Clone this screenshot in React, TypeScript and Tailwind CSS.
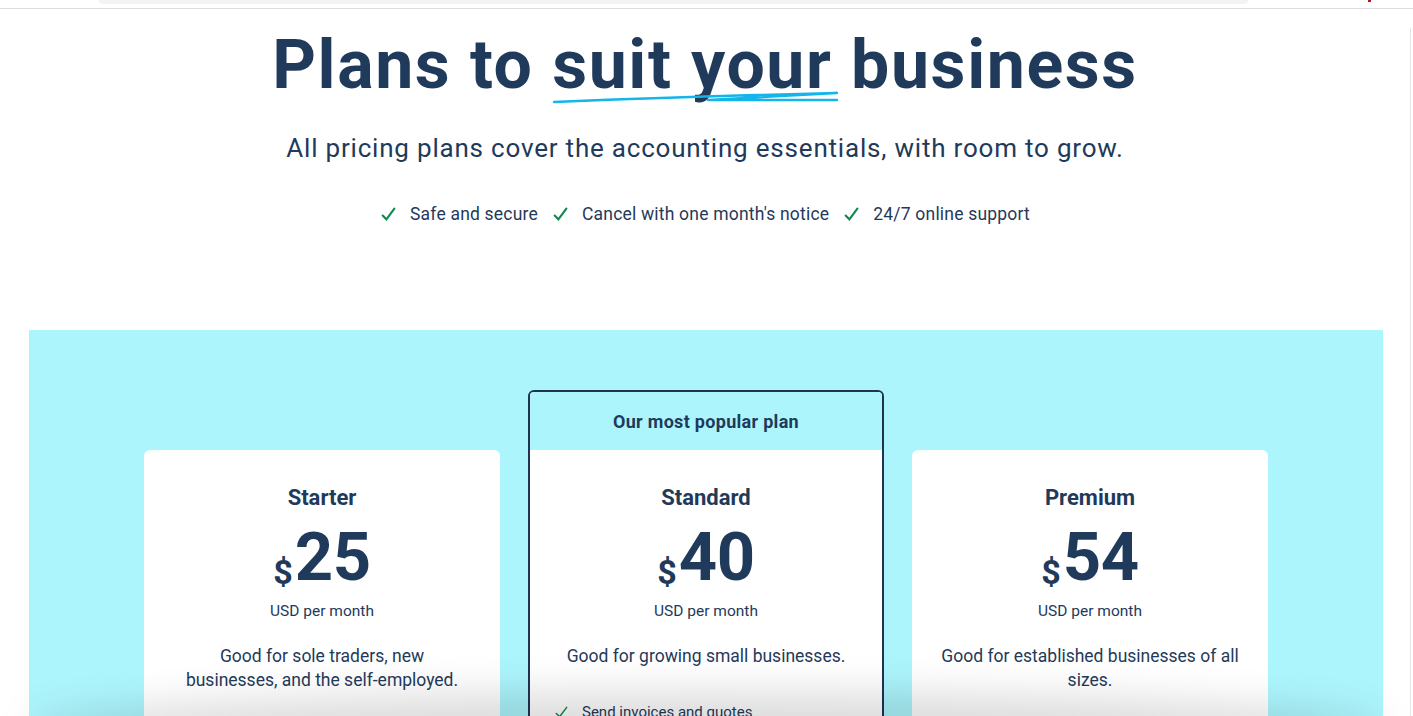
import React from "react";

const navy = "text-[#1f3a5a]";

function Check({ className = "", width = 1.6 }: { className?: string; width?: number }) {
  return (
    <svg viewBox="0 0 16 16" className={className} fill="none" stroke="#0f8a4f" strokeWidth={width} strokeLinecap="round">
      <path d="M2.5 9 L6 12.5 L13.5 2.5" />
    </svg>
  );
}

interface Plan {
  name: string;
  price: string;
  blurb: string;
  features: string[];
  popular?: boolean;
}

const plans: Plan[] = [
  {
    name: "Starter",
    price: "25",
    blurb: "Good for sole traders, new\nbusinesses, and the self-employed.",
    features: ["Send quotes and 20 invoices", "Enter 5 bills", "Reconcile bank transactions"],
  },
  {
    name: "Standard",
    price: "40",
    blurb: "Good for growing small businesses.",
    features: ["Send invoices and quotes", "Enter bills", "Reconcile bank transactions", "Bulk reconcile transactions"],
    popular: true,
  },
  {
    name: "Premium",
    price: "54",
    blurb: "Good for established businesses of all sizes.",
    features: ["Send invoices and quotes", "Enter bills", "Reconcile bank transactions", "Use multiple currencies"],
  },
];

function PlanCard({ plan }: { plan: Plan }) {
  const body = (
    <div className="bg-white px-6 pt-[36px] pb-10 flex flex-col items-center text-center flex-1">
      <h3 className="text-[22px] font-bold leading-6">{plan.name}</h3>
      <div className="flex items-end mt-[10px] h-[66px]">
        <span className="text-[34px] font-bold leading-none mb-[-3px] mr-[2px]">$</span>
        <span className="text-[67px] font-bold leading-[57px] tracking-[-0.5px]">{plan.price}</span>
      </div>
      <p className="text-[15.5px] mt-[15px] leading-5">USD per month</p>
      <p className="text-[17.5px] leading-6 mt-[23px] whitespace-pre-line">{plan.blurb}</p>
      <ul className="mt-[34px] self-stretch flex flex-col gap-3 text-left text-[15px]">
        {plan.features.map((f) => (
          <li key={f} className="flex items-center gap-[13px] leading-5">
            <Check className="w-[15px] h-[15px] shrink-0" />
            <span>{f}</span>
          </li>
        ))}
      </ul>
    </div>
  );

  if (plan.popular) {
    return (
      <div className="w-[356px] border-2 border-[#1f3352] rounded-md overflow-hidden flex flex-col">
        <div className="h-[58px] flex items-center justify-center bg-[#adf5fd] text-[18px] font-bold tracking-[0.3px]">
          Our most popular plan
        </div>
        {body}
      </div>
    );
  }
  return <div className="w-[356px] mt-[60px] rounded-md overflow-hidden flex flex-col">{body}</div>;
}

export default function App() {
  return (
    <div className={`relative w-[1413px] h-[716px] overflow-hidden bg-white ${navy}`} style={{ fontFamily: "Roboto, 'Noto Sans', sans-serif" }}>
      {/* browser chrome strip */}
      <div className="h-[9px] border-b border-[#dedede] flex items-start pl-[99px]">
        <div className="w-[1149px] h-[4px] bg-[#f1f3f4] rounded-b-lg" />
        <div className="ml-[120px] w-[3px] h-[2px] bg-[#c0141c]" />
      </div>

      <div className="w-[1411px] border-r border-[#e5e5e5] h-full">
        <h1 className="text-center text-[68px] font-bold leading-[75px] tracking-[1.6px] mt-[19px]">
          Plans to{" "}
          <span className="relative inline-block">
            suit your
            <svg className="absolute left-[0px] top-[62px] w-[290px] h-[16px]" viewBox="0 0 290 16" fill="none" stroke="#13b5ea" strokeWidth="2.4" strokeLinecap="round" strokeLinejoin="round">
              <path d="M2 12 Q150 6 285 3 L156 10 L285 10" />
            </svg>
          </span>{" "}
          business
        </h1>
        <p className="text-center text-[26px] leading-8 mt-[29px] tracking-[0.8px]">
          All pricing plans cover the accounting essentials, with room to grow.
        </p>
        <div className="flex justify-center items-center gap-[14px] mt-[37px] text-[17.5px] tracking-[0.2px]">
          {["Safe and secure", "Cancel with one month's notice", "24/7 online support"].map((t) => (
            <div key={t} className="flex items-center gap-[13px]">
              <Check className="w-[17px] h-[17px]" width={2} />
              <span>{t}</span>
            </div>
          ))}
        </div>

        <section className="mx-[29px] w-[1354px] mt-[103px] bg-[#adf5fd] pt-[60px] pb-20 flex justify-center gap-[28px] items-start">
          {plans.map((p) => (
            <PlanCard key={p.name} plan={p} />
          ))}
        </section>
      </div>

      {/* shadow of the sticky bar just below the fold */}
      <div className="absolute left-[40px] right-[40px] bottom-[-40px] h-[40px] rounded-[50%] shadow-[0_-8px_40px_16px_rgba(0,0,0,0.14)]" />
    </div>
  );
}
